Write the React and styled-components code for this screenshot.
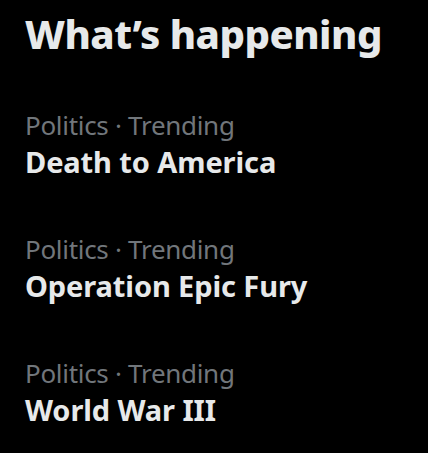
import React from "react";
import styled, { createGlobalStyle } from "styled-components";

const GlobalStyle = createGlobalStyle`
  html, body {
    margin: 0;
    padding: 0;
    background: #000000;
  }
`;

const Panel = styled.section`
  width: 428px;
  height: 453px;
  background: #000000;
  font-family: "Noto Sans", "Open Sans", sans-serif;
  color: #e7e9ea;
  padding-top: 10px;
  box-sizing: border-box;
  overflow: hidden;
`;

const Heading = styled.h2`
  margin: 0 0 24px;
  padding: 0 25px;
  font-size: 40px;
  line-height: 48px;
  font-weight: 800;
  letter-spacing: -0.5px;
`;

const TrendList = styled.div`
  display: flex;
  flex-direction: column;
`;

const TrendItem = styled.div`
  display: flex;
  flex-direction: column;
  padding: 26px 25px 24px;
`;

const Meta = styled.span`
  font-size: 26px;
  line-height: 34px;
  color: #71767b;
  letter-spacing: -0.3px;
`;

const TrendName = styled.span`
  font-size: 29px;
  line-height: 40px;
  font-weight: 700;
  color: #e7e9ea;
  letter-spacing: -0.1px;
`;

const trends = [
  { category: "Politics", name: "Death to America" },
  { category: "Politics", name: "Operation Epic Fury" },
  { category: "Politics", name: "World War III" },
];

const App = () => {
  return (
    <>
      <GlobalStyle />
      <Panel>
        <Heading>What’s happening</Heading>
        <TrendList>
          {trends.map((t) => (
            <TrendItem key={t.name}>
              <Meta>{t.category} · Trending</Meta>
              <TrendName>{t.name}</TrendName>
            </TrendItem>
          ))}
        </TrendList>
      </Panel>
    </>
  );
};

export default App;
